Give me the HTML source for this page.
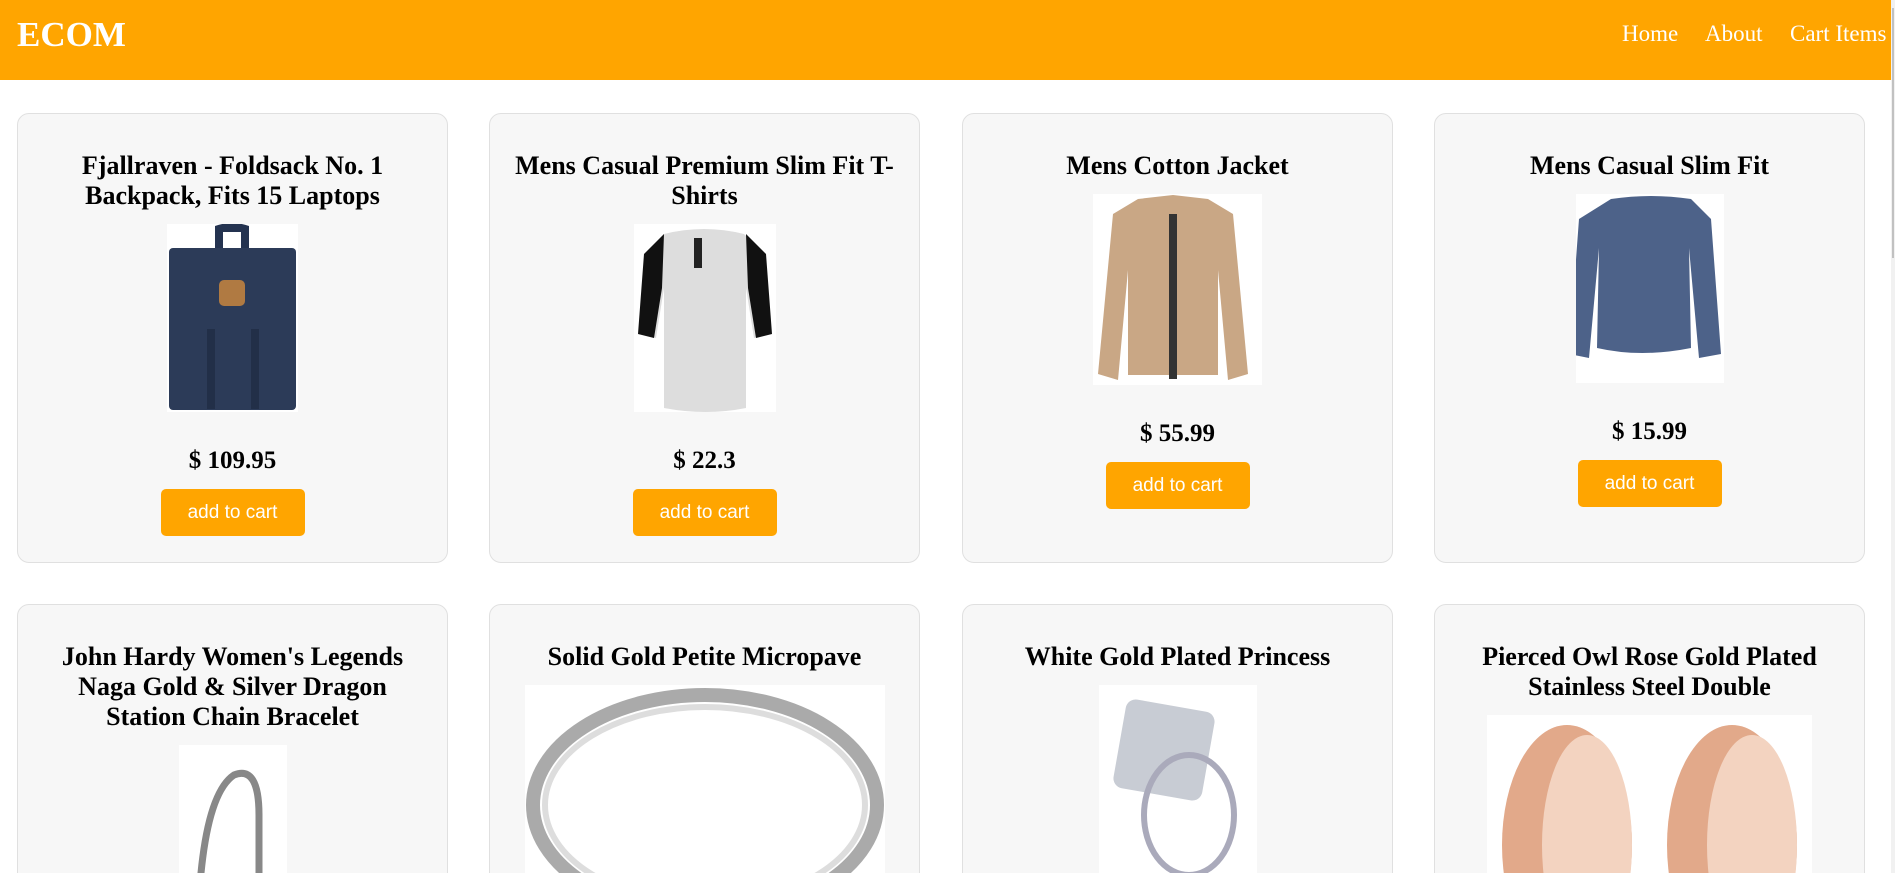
<!DOCTYPE html>
<html><head><meta charset="utf-8"><style>
html,body{margin:0;padding:0;width:1895px;height:873px;overflow:hidden;}
body{background:#fff;font-family:"Liberation Serif",serif;}
.wrap{position:relative;width:1895px;height:873px;overflow:hidden;}
.hdr{position:absolute;left:0;top:0;width:1891px;height:80px;background:#FFA500;}
.logo{position:absolute;left:17px;top:15px;font-size:35px;font-weight:bold;color:#fff;line-height:40px;}
.nav{position:absolute;top:20px;font-size:23px;color:#fff;line-height:28px;white-space:nowrap;}
.sb{position:absolute;left:1891px;top:0;width:4px;height:873px;background:#f1f1f1;}
.sb:after{content:"";position:absolute;left:1px;top:8px;width:2px;height:250px;background:#c1c1c1;}
.card{position:absolute;width:429px;height:448px;background:#f7f7f7;border:1px solid #e0e0e0;border-radius:12px;display:flex;flex-direction:column;align-items:center;box-sizing:content-box;overflow:hidden;}
.r2{height:300px;}
.t{margin-top:37px;font-size:26px;font-weight:bold;line-height:30px;text-align:center;white-space:nowrap;color:#000;}
.img{margin-top:13px;height:188px;background:#fff;position:relative;overflow:hidden;flex-shrink:0;}
.p{margin-top:34px;font-size:25px;font-weight:bold;line-height:30px;}
.b{margin-top:13px;width:144px;height:47px;background:#FFA500;border-radius:5px;color:#fff;font-family:"Liberation Sans",sans-serif;font-size:19px;line-height:47px;text-align:center;}
</style></head><body><div class="wrap">
<div class="hdr">
<div class="logo">ECOM</div>
<div class="nav" style="left:1622px">Home</div>
<div class="nav" style="left:1705px">About</div>
<div class="nav" style="left:1790px">Cart Items</div>
</div>
<div class="sb"></div>

<div class="card" style="left:17px;top:113px">
<div class="t">Fjallraven - Foldsack No. 1<br>Backpack, Fits 15 Laptops</div>
<div class="img" style="width:131px"><svg width="131" height="188"><path d="M48 2 q17 -6 34 0 v22 h-8 v-16 h-18 v16 h-8z" fill="#243350"/><rect x="2" y="24" width="127" height="162" rx="4" fill="#2c3b58"/><rect x="52" y="56" width="26" height="26" rx="5" fill="#b07a42"/><rect x="40" y="105" width="8" height="80" fill="#222f48"/><rect x="84" y="105" width="8" height="80" fill="#222f48"/></svg></div>
<div class="p">$ 109.95</div>
<div class="b">add to cart</div>
</div>

<div class="card" style="left:489px;top:113px">
<div class="t">Mens Casual Premium Slim Fit T-<br>Shirts</div>
<div class="img" style="width:142px"><svg width="142" height="188"><path d="M30 10 q40 -10 80 0 l20 20 l6 80 l-16 4 l-8 -50 l0 120 q-40 8 -82 0 l0 -120 l-8 50 l-16 -4 l6 -80z" fill="#ddd"/><path d="M30 10 l-20 20 l-6 80 l16 4 l8 -50z M112 10 l20 20 l6 80 l-16 4 l-8 -50z" fill="#111"/><rect x="60" y="14" width="8" height="30" fill="#222"/></svg></div>
<div class="p">$ 22.3</div>
<div class="b">add to cart</div>
</div>

<div class="card" style="left:962px;top:113px">
<div class="t">Mens Cotton Jacket</div>
<div class="img" style="width:169px;height:191px"><svg width="169" height="191"><path d="M45 5 l35 -4 l35 4 l25 15 l15 160 l-20 6 l-10 -110 l0 105 l-90 0 l0 -105 l-10 110 l-20 -6 l15 -160z" fill="#c9a785"/><path d="M76 20 l8 0 l0 165 l-8 0z" fill="#333"/></svg></div>
<div class="p">$ 55.99</div>
<div class="b">add to cart</div>
</div>

<div class="card" style="left:1434px;top:113px">
<div class="t">Mens Casual Slim Fit</div>
<div class="img" style="width:148px;height:189px"><svg width="148" height="189"><path d="M35 5 q40 -6 80 0 l20 20 l10 135 l-22 4 l-10 -110 l2 100 q-50 10 -94 0 l2 -100 l-10 110 l-20 -4 l10 -135z" fill="#4d6289"/></svg></div>
<div class="p">$ 15.99</div>
<div class="b">add to cart</div>
</div>

<div class="card r2" style="left:17px;top:604px">
<div class="t">John Hardy Women's Legends<br>Naga Gold &amp; Silver Dragon<br>Station Chain Bracelet</div>
<div class="img" style="width:108px;height:300px"><svg width="108" height="300"><path d="M20 300 q-10 -240 35 -270 q25 -10 25 40 l0 260" fill="none" stroke="#888" stroke-width="7"/></svg></div>
</div>

<div class="card r2" style="left:489px;top:604px">
<div class="t">Solid Gold Petite Micropave</div>
<div class="img" style="width:360px;height:300px"><svg width="360" height="300"><ellipse cx="180" cy="120" rx="172" ry="110" fill="none" stroke="#aaa" stroke-width="14"/><ellipse cx="180" cy="120" rx="160" ry="98" fill="none" stroke="#ddd" stroke-width="6"/></svg></div>
</div>

<div class="card r2" style="left:962px;top:604px">
<div class="t">White Gold Plated Princess</div>
<div class="img" style="width:158px;height:300px"><svg width="158" height="300"><rect x="20" y="20" width="90" height="90" rx="10" fill="#c8ccd4" transform="rotate(10 65 65)"/><ellipse cx="90" cy="130" rx="45" ry="60" fill="none" stroke="#aab" stroke-width="6"/></svg></div>
</div>

<div class="card r2" style="left:1434px;top:604px">
<div class="t">Pierced Owl Rose Gold Plated<br>Stainless Steel Double</div>
<div class="img" style="width:325px;height:300px"><svg width="325" height="300"><ellipse cx="80" cy="130" rx="65" ry="120" fill="#e2a98a"/><ellipse cx="100" cy="130" rx="45" ry="110" fill="#f3d3c0"/><ellipse cx="245" cy="130" rx="65" ry="120" fill="#e2a98a"/><ellipse cx="265" cy="130" rx="45" ry="110" fill="#f3d3c0"/></svg></div>
</div>
</div></body></html>
